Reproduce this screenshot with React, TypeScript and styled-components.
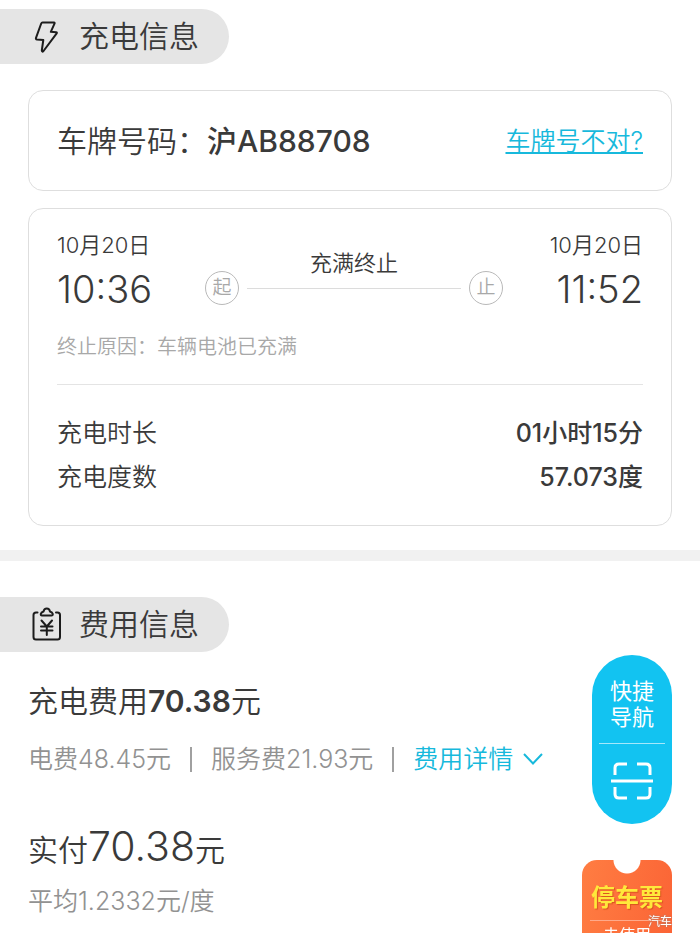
import React from "react";
import styled, { createGlobalStyle } from "styled-components";

const ink = "#3a3a3a";
const muted = "#929292";
const faint = "#a8a8a8";
const accent = "#17b9dc";
const sky = "#12c3f1";

const GlobalStyle = createGlobalStyle`
  *, *::before, *::after { box-sizing: border-box; }
  body {
    margin: 0;
    background: #fff;
    color: ${ink};
    font-family: Inter, "Noto Sans CJK SC", sans-serif;
    font-weight: 350;
    overflow-x: hidden;
  }
  h2, p, dl, dt, dd { margin: 0; font-weight: inherit; }
  button { font: inherit; border: 0; background: none; padding: 0; cursor: pointer; }
`;

const Page = styled.main`
  padding-top: 9px;
`;

const SectionTag = styled.h2`
  display: inline-flex;
  align-items: center;
  gap: 15px;
  height: 55px;
  padding: 0 30px 0 29px;
  border-radius: 0 28px 28px 0;
  background: #e5e5e5;
  font-size: 30px;
  line-height: 55px;
`;

const TagIcon = styled.svg`
  width: 35px;
  height: 35px;
  fill: none;
  stroke: #1c1c1c;
  stroke-linecap: round;
  stroke-linejoin: round;
`;

const Section = styled.section`
  display: flex;
  flex-direction: column;
  align-items: flex-start;
`;

const Cards = styled.div`
  display: flex;
  flex-direction: column;
  gap: 17px;
  width: 100%;
  padding: 26px 28px 24px;
`;

const Card = styled.div`
  border: 1px solid #dedede;
  border-radius: 15px;
  padding: 0 28px;
`;

const PlateCard = styled(Card)`
  display: flex;
  align-items: center;
  justify-content: space-between;
  height: 101px;
`;

const Plate = styled.p`
  font-size: 30px;
  line-height: 40px;
`;

const Strong = styled.strong<{ $weight?: number }>`
  font-weight: ${(p) => p.$weight ?? 600};
`;

const WrongPlate = styled.a`
  color: ${accent};
  font-size: 25px;
  line-height: 34px;
  text-decoration: underline;
  text-decoration-thickness: 2px;
  text-underline-offset: 2px;
  text-decoration-skip-ink: none;
`;

const SessionCard = styled(Card)`
  padding-top: 20px;
  padding-bottom: 26px;
`;

const Timeline = styled.div`
  display: flex;
  align-items: stretch;
  justify-content: space-between;
`;

const Moment = styled.time<{ $end?: boolean }>`
  display: flex;
  flex: 1;
  flex-direction: column;
  text-align: ${(p) => (p.$end ? "right" : "left")};
`;

const Day = styled.span`
  font-size: 22px;
  line-height: 32px;
`;

const Clock = styled.span`
  font-size: 38px;
  line-height: 56px;
`;

const Track = styled.div`
  display: flex;
  align-items: flex-end;
  gap: 8px;
  width: 298px;
  margin: 0 4px 0 12px;
  padding-bottom: 12px;
`;

const Stop = styled.span`
  flex: none;
  width: 34px;
  height: 34px;
  border: 1px solid #b9b9b9;
  border-radius: 50%;
  color: ${faint};
  font-size: 19px;
  line-height: 32px;
  text-align: center;
`;

const Outcome = styled.span`
  flex: 1;
  height: 42px;
  margin-bottom: 16px;
  border-bottom: 1px solid #dcdcdc;
  font-size: 22px;
  line-height: 32px;
  text-align: center;
`;

const Reason = styled.p`
  margin-top: 15px;
  padding-bottom: 22px;
  border-bottom: 1px solid #e4e4e4;
  color: ${faint};
  font-size: 20px;
  line-height: 30px;
`;

const Facts = styled.dl`
  margin-top: 26px;
`;

const Fact = styled.div`
  display: flex;
  justify-content: space-between;
  font-size: 25px;
  line-height: 44px;
`;

const FactValue = styled.dd`
  && { font-weight: 500; }
`;

const Band = styled.div`
  height: 11px;
  margin-bottom: 36px;
  background: #f1f1f1;
`;

const Fees = styled.div`
  padding: 28px 28px 12px;
`;

const FeeTotal = styled.p`
  font-size: 30px;
  line-height: 42px;
`;

const Breakdown = styled.div`
  display: flex;
  align-items: center;
  gap: 19px;
  margin-top: 20px;
  color: ${muted};
  font-size: 25px;
  line-height: 34px;
`;

const Divider = styled.span`
  width: 2px;
  height: 25px;
  background: #a0a0a0;
`;

const DetailButton = styled.button`
  display: flex;
  align-items: center;
  gap: 9px;
  color: ${accent};
`;

const Paid = styled.p`
  margin-top: 42px;
  font-size: 30px;
  line-height: 56px;
`;

const PaidAmount = styled.span`
  font-size: 41px;
`;

const Average = styled.p`
  margin-top: 6px;
  color: ${muted};
  font-size: 25px;
  line-height: 34px;
`;

const Floating = styled.aside`
  position: fixed;
  right: 28px;
  bottom: -28px;
  display: flex;
  flex-direction: column;
  align-items: flex-end;
  gap: 36px;
`;

const QuickNav = styled.nav`
  display: flex;
  flex-direction: column;
  align-items: center;
  width: 80px;
  height: 169px;
  padding: 23px 7px 0;
  border-radius: 40px;
  background: ${sky};
  color: #fff;
`;

const NavButton = styled.button`
  width: 100%;
  height: 66px;
  border-bottom: 1px solid #a5e8fb;
  color: #fff;
  font-size: 22px;
  font-weight: 400;
  line-height: 26px;
  display: flex;
  flex-direction: column;
  align-items: center;
`;

const ScanButton = styled.button`
  display: flex;
  margin-top: 17px;
`;

const Coupon = styled.button`
  display: flex;
  flex-direction: column;
  align-items: center;
  width: 90px;
  height: 101px;
  padding: 20px 8px 0;
  border-radius: 15px;
  background: radial-gradient(circle at 50% 0, #fff 13px, transparent 14px),
    linear-gradient(100deg, #ff7d42, #fb6335);
`;

const CouponTitle = styled.span`
  width: 100%;
  height: 41px;
  border-bottom: 1px solid #ffa98a;
  color: #ffe83b;
  font-size: 24px;
  font-weight: 700;
  line-height: 36px;
  text-shadow: 1px 1px 1px #d9541f;
`;

const CouponAction = styled.span`
  color: #fff;
  font-size: 16px;
  font-weight: 400;
  line-height: 28px;
`;

const Watermark = styled.span`
  position: fixed;
  right: 28px;
  bottom: 2px;
  color: #fff;
  font-size: 12px;
  font-weight: 400;
  line-height: 18px;
  text-shadow: 0 0 2px #888;
`;

export default function App() {
  return (
    <>
      <GlobalStyle />
      <Page>
        <Section>
          <SectionTag>
            <TagIcon viewBox="0 0 35 35" strokeWidth="2" aria-hidden="true">
              <path d="M13.5 3.500 L25 3.500 Q26 3.500 25.500 4.700 L21.800 12.800 L27 13.200 Q28.500 13.400 27.500 14.600 L14.500 32 Q13 33.500 12.800 31.500 L14.300 21 L8 20.400 Q6.500 20.200 7 18.800 L12.200 4.500 Q12.600 3.500 13.500 3.500 Z" />
            </TagIcon>
            充电信息
          </SectionTag>
          <Cards>
            <PlateCard>
              <Plate>
                车牌号码：<Strong $weight={500}>沪AB88708</Strong>
              </Plate>
              <WrongPlate href="#plate">车牌号不对?</WrongPlate>
            </PlateCard>
            <SessionCard>
              <Timeline>
                <Moment>
                  <Day>10月20日</Day>
                  <Clock>10:36</Clock>
                </Moment>
                <Track>
                  <Stop>起</Stop>
                  <Outcome>充满终止</Outcome>
                  <Stop>止</Stop>
                </Track>
                <Moment $end>
                  <Day>10月20日</Day>
                  <Clock>11:52</Clock>
                </Moment>
              </Timeline>
              <Reason>终止原因：车辆电池已充满</Reason>
              <Facts>
                <Fact>
                  <dt>充电时长</dt>
                  <FactValue>01小时15分</FactValue>
                </Fact>
                <Fact>
                  <dt>充电度数</dt>
                  <FactValue>57.073度</FactValue>
                </Fact>
              </Facts>
            </SessionCard>
          </Cards>
        </Section>
        <Band />
        <Section>
          <SectionTag>
            <TagIcon viewBox="0 0 35 35" strokeWidth="2" aria-hidden="true">
              <path d="M8.500 5.500 H7 Q4.500 5.500 4.500 8 V30 Q4.500 32.500 7 32.500 H28.500 Q31 32.500 31 30 V8 Q31 5.500 28.500 5.500 H27" />
              <path d="M13 8.500 Q11.500 8.500 11.800 7 Q12.200 5.300 14.500 4.500 Q15 1.500 17.800 1.500 Q20.500 1.500 21 4.500 Q23.300 5.300 23.800 7 Q24 8.500 22.500 8.500 Z" />
              <path d="M12.500 13.500 L17.800 19.500 L23 13.500 M17.800 19.500 V28 M12 19.500 H23.500 M12 23.500 H23.500" />
            </TagIcon>
            费用信息
          </SectionTag>
          <Fees>
            <FeeTotal>
              充电费用<Strong>70.38</Strong>元
            </FeeTotal>
            <Breakdown>
              <span>电费48.45元</span>
              <Divider />
              <span>服务费21.93元</span>
              <Divider />
              <DetailButton type="button">
                费用详情
                <svg width="22" height="14" viewBox="0 0 22 14" fill="none" stroke="currentColor" strokeWidth="2" aria-hidden="true">
                  <path d="M2 2 L11 11.500 L20 2" />
                </svg>
              </DetailButton>
            </Breakdown>
            <Paid>
              实付<PaidAmount>70.38</PaidAmount>元
            </Paid>
            <Average>平均1.2332元/度</Average>
          </Fees>
        </Section>
      </Page>
      <Floating>
        <QuickNav>
          <NavButton type="button">
            <span>快捷</span>
            <span>导航</span>
          </NavButton>
          <ScanButton type="button" aria-label="扫一扫">
            <svg width="44" height="42" viewBox="0 0 44 42" fill="none" stroke="#fff" strokeWidth="3" aria-hidden="true">
              <path d="M5 14 V7 Q5 3 9 3 H17 M27 3 H36 Q40 3 40 7 V14 M5 26 V33 Q5 37 9 37 H17 M27 37 H36 Q40 37 40 33 V26 M1 20 H43" />
            </svg>
          </ScanButton>
        </QuickNav>
        <Coupon type="button">
          <CouponTitle>停车票</CouponTitle>
          <CouponAction>去使用</CouponAction>
        </Coupon>
      </Floating>
      <Watermark>汽车</Watermark>
    </>
  );
}
